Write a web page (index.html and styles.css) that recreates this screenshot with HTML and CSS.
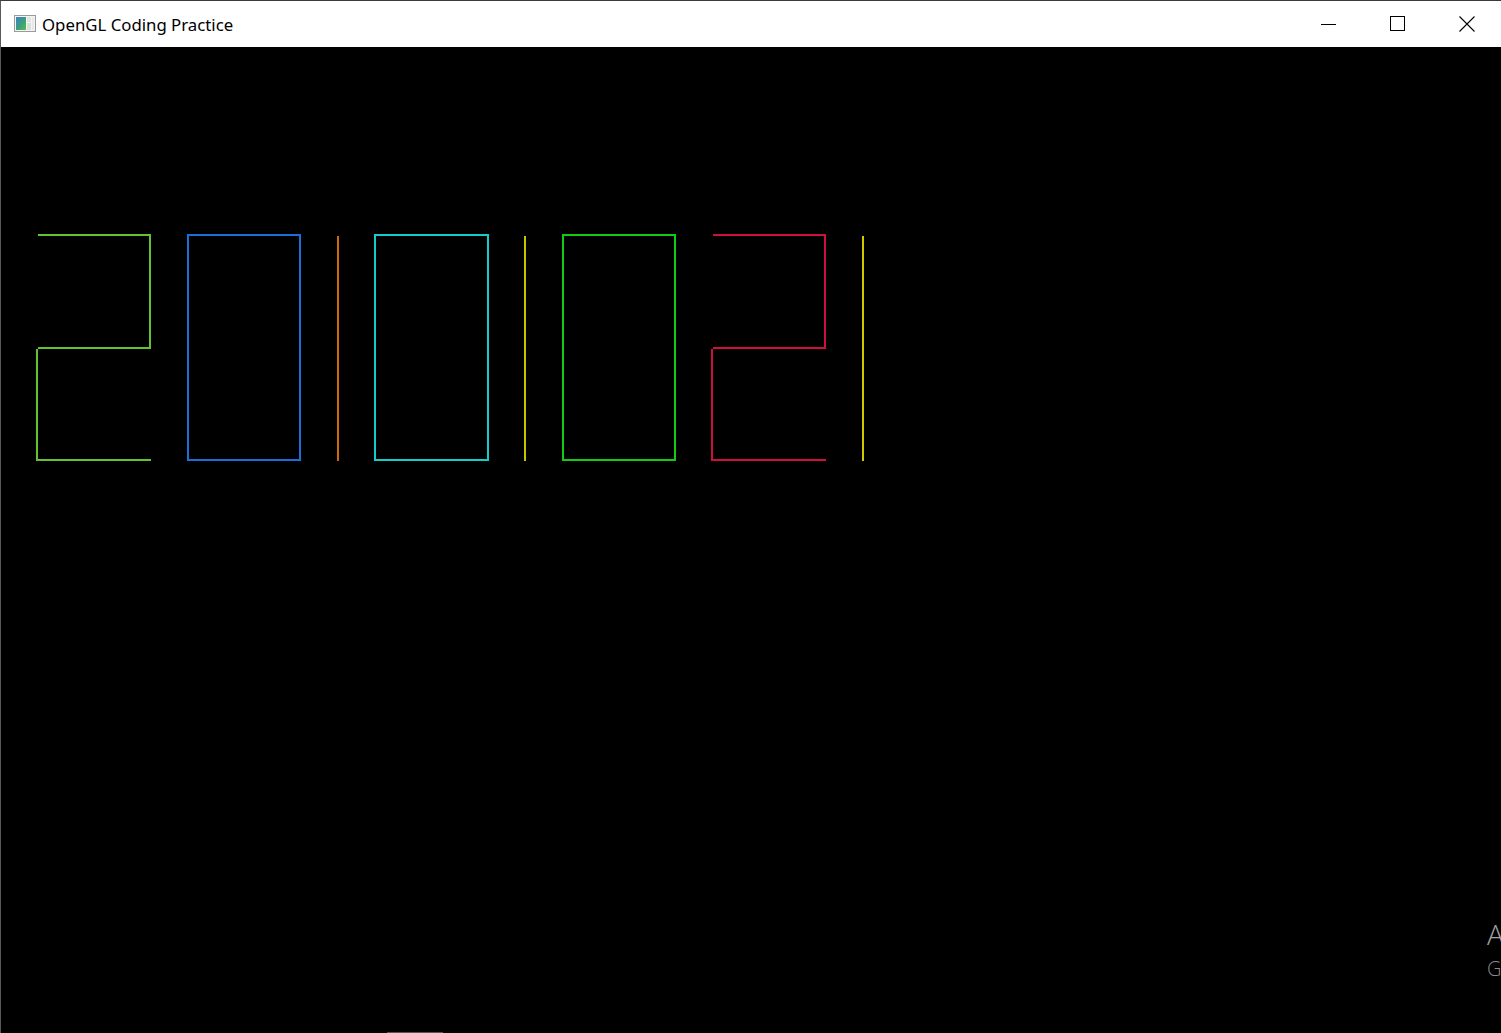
FILE: index.html
```html
<!DOCTYPE html>
<html>
<head>
<meta charset="utf-8">
<title>OpenGL Coding Practice</title>
<link rel="stylesheet" href="styles.css">
</head>
<body>
<div class="window">
  <header class="titlebar">
    <div class="app-icon">
      <svg width="22" height="17" viewBox="0 0 22 17">
        <defs>
          <linearGradient id="g1" x1="0" y1="0" x2="1" y2="1">
            <stop offset="0" stop-color="#3f7fd0"/>
            <stop offset="0.55" stop-color="#3aa07a"/>
            <stop offset="1" stop-color="#5fb84a"/>
          </linearGradient>
        </defs>
        <rect x="0.5" y="0.5" width="21" height="16" fill="#f4f4f4" stroke="#9a9a9a"/>
        <rect x="2" y="2" width="10" height="13" fill="url(#g1)"/>
        <rect x="13" y="2" width="4" height="5" fill="#e2e6e2"/>
        <rect x="13" y="8" width="4" height="7" fill="#d9e2da"/>
        <rect x="18" y="2" width="2" height="13" fill="#e8e8e8"/>
      </svg>
    </div>
    <div class="title">OpenGL Coding Practice</div>
    <div class="controls">
      <div class="ctl">
        <svg width="16" height="16" viewBox="0 0 16 16"><path d="M0 8.5H15" stroke="#000" stroke-width="1"/></svg>
      </div>
      <div class="ctl">
        <svg width="16" height="16" viewBox="0 0 16 16"><rect x="0.5" y="0.5" width="14" height="14" fill="none" stroke="#000" stroke-width="1"/></svg>
      </div>
      <div class="ctl">
        <svg width="16" height="16" viewBox="0 0 16 16"><path d="M0.5 0.5L15.5 15.5M15.5 0.5L0.5 15.5" stroke="#000" stroke-width="1.1"/></svg>
      </div>
    </div>
  </header>
  <main class="client">
    <svg class="canvas" width="1499" height="986" viewBox="1 47 1499 986">
      <g fill="none" stroke-width="2" stroke-linecap="butt">
        <polyline points="38,235 150,235 150,348 38,348" stroke="#63c132"/>
        <polyline points="37,349 37,460 151,460" stroke="#63c132"/>
        <rect x="188" y="235" width="112" height="225" stroke="#1a6ed8"/>
        <line x1="338" y1="236" x2="338" y2="461" stroke="#cc6a0a"/>
        <rect x="375" y="235" width="113" height="225" stroke="#14cccc"/>
        <line x1="525" y1="236" x2="525" y2="461" stroke="#c4c400"/>
        <rect x="563" y="235" width="112" height="225" stroke="#12cc12"/>
        <polyline points="713,235 825,235 825,348 713,348" stroke="#d0103c"/>
        <polyline points="712,349 712,460 826,460" stroke="#d0103c"/>
        <line x1="863" y1="236" x2="863" y2="461" stroke="#d2c800"/>
      </g>
    </svg>
    <div class="watermark">
      <div class="wm-1">Activate Windows</div>
      <div class="wm-2">Go to Settings to activate Windows.</div>
    </div>
    <div class="taskbar-hint"></div>
  </main>
</div>
</body>
</html>
```

FILE: styles.css
```css
html, body {
  margin: 0;
  padding: 0;
  width: 1501px;
  height: 1033px;
  overflow: hidden;
  background: #000;
}

.window {
  width: 1501px;
  height: 1033px;
  display: flex;
  flex-direction: column;
  box-sizing: border-box;
  border-top: 1px solid #3a3a3a;
  border-left: 1px solid #555a60;
}

.titlebar {
  height: 46px;
  flex: 0 0 46px;
  background: #fff;
  display: flex;
  align-items: center;
  font-family: "Segoe UI", "Noto Sans", "Open Sans", sans-serif;
}

.app-icon {
  width: 22px;
  height: 17px;
  margin-left: 13px;
  margin-top: -2px;
  display: flex;
}

.title {
  margin-left: 6px;
  font-size: 16.8px;
  color: #000;
  margin-top: 1px;
}

.controls {
  margin-left: auto;
  display: flex;
  height: 100%;
}

.ctl {
  width: 69px;
  height: 100%;
  display: flex;
  align-items: center;
  justify-content: center;
}

.ctl svg {
  margin-top: -1px;
}

.client {
  flex: 1;
  position: relative;
  background: #000;
  overflow: hidden;
}

.canvas {
  display: block;
}

.watermark {
  position: absolute;
  left: 1486px;
  top: 869px;
  font-family: "Segoe UI", "Open Sans", "Noto Sans", sans-serif;
  font-weight: 300;
  white-space: nowrap;
}

.wm-1 {
  font-size: 28px;
  color: #a3a3a3;
  line-height: 36px;
}

.wm-2 {
  font-size: 20px;
  color: #8a8a8a;
  line-height: 34px;
}

.taskbar-hint {
  position: absolute;
  left: 386px;
  bottom: 0;
  width: 56px;
  height: 1px;
  background: #555;
}
```
